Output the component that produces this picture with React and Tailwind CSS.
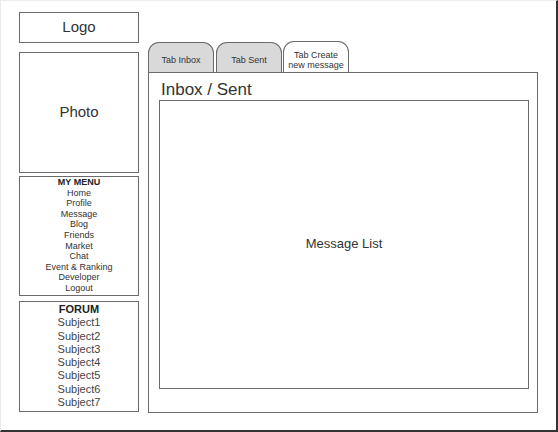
const menuItems = [
  "Home",
  "Profile",
  "Message",
  "Blog",
  "Friends",
  "Market",
  "Chat",
  "Event & Ranking",
  "Developer",
  "Logout",
];

const subjects = [
  "Subject1",
  "Subject2",
  "Subject3",
  "Subject4",
  "Subject5",
  "Subject6",
  "Subject7",
];

const tabs = [
  { label: "Tab Inbox", active: false },
  { label: "Tab Sent", active: false },
  { label: "Tab Create\nnew message", active: true },
];

const Tab = ({ label, active }) => (
  <div
    className={`flex w-[66px] items-center justify-center whitespace-pre-line rounded-t-[11px] border border-b-0 border-[#6a6a6a] pt-[5px] text-center text-[9px] leading-[10px] text-[#333] ${
      active ? "-ml-[1px] h-[31px] bg-white" : "h-[30px] bg-[#d9d9d9]"
    }`}
  >
    {label}
  </div>
);

const App = () => {
  return (
    <div
      className="flex h-[432px] w-[558px] gap-[9px] border-t border-l border-[#ececec] border-r-2 border-b-2 border-r-[#333] border-b-[#333] bg-white pl-[18px] pt-[11px]"
      style={{ fontFamily: '"Liberation Sans", Arial, sans-serif' }}
    >
      {/* left column: logo, photo, menu, forum */}
      <div className="flex w-[120px] flex-col">
        <div className="flex h-[31px] items-center justify-center border border-[#6a6a6a] text-[15px] text-[#333]">
          Logo
        </div>
        <div className="mt-[9px] flex h-[121px] items-center justify-center border border-[#6a6a6a] text-[15px] text-[#333]">
          Photo
        </div>
        <div className="mt-[3px] flex h-[120px] flex-col items-center border border-[#6a6a6a] text-[9px] leading-[10.6px] text-[#333]">
          <div className="font-bold text-[#222]">MY MENU</div>
          {menuItems.map((item) => (
            <div key={item}>{item}</div>
          ))}
        </div>
        <div className="mt-[5px] flex h-[111px] flex-col items-center border border-[#6a6a6a] pt-[1px] text-[11px] leading-[13.25px] text-[#444]">
          <div className="font-bold text-[#222]">FORUM</div>
          {subjects.map((s) => (
            <div key={s}>{s}</div>
          ))}
        </div>
      </div>

      {/* right column: tabs and message panel */}
      <div className="flex flex-col pt-[30px]">
        <div className="flex h-[30px] items-end gap-[2px]">
          {tabs.map((t) => (
            <Tab key={t.label} label={t.label} active={t.active} />
          ))}
        </div>
        <div className="flex h-[341px] w-[390px] flex-col border border-[#6a6a6a] pt-[8px] pr-[8px] pb-[23px] pl-[10px]">
          <div className="h-[19px] pl-[2px] text-[17px] leading-[17px] text-[#333]">
            Inbox / Sent
          </div>
          <div className="flex flex-1 items-center justify-center border border-[#6a6a6a] pb-[2px] text-[13px] text-[#333]">
            Message List
          </div>
        </div>
      </div>
    </div>
  );
};

export default App;
